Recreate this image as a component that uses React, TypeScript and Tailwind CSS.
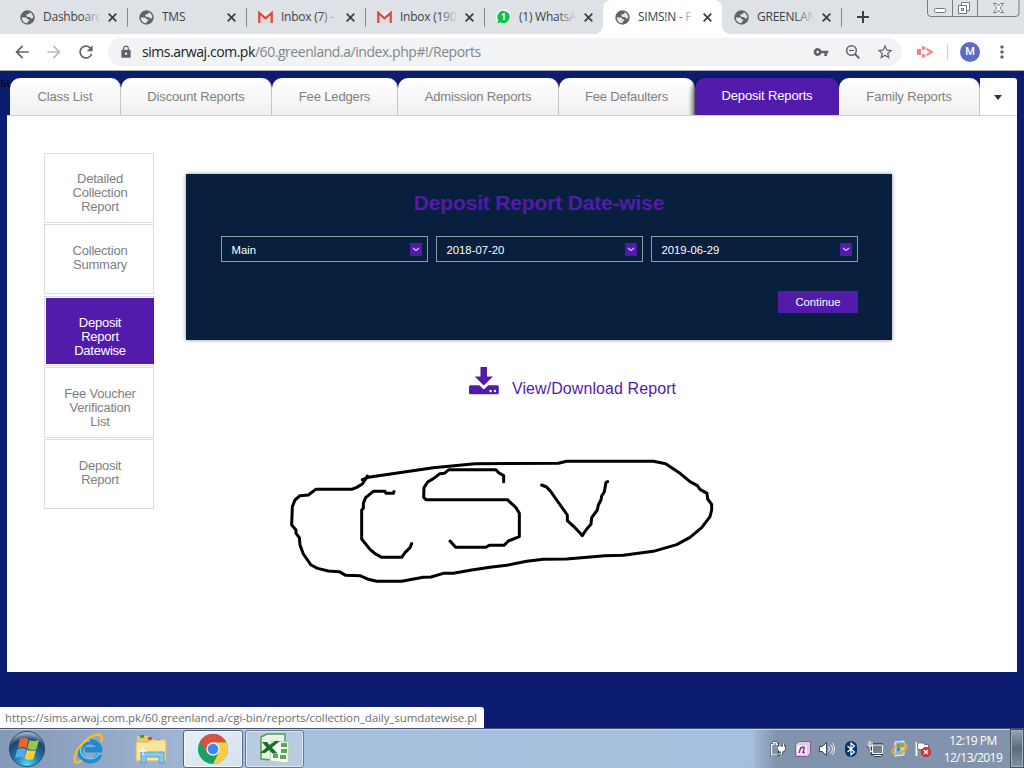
import React from "react";
import {
  MdArrowBack,
  MdArrowForward,
  MdRefresh,
  MdLock,
  MdVpnKey,
  MdStarBorder,
  MdMoreVert,
} from "react-icons/md";

const Globe = () => (
  <svg viewBox="0 0 15 15" className="h-[15px] w-[15px]">
    <circle cx="7.500" cy="7.500" r="7.200" fill="#5f6368" />
    <path
      d="M1.800 7.600H5.600Q7.600 7.800 7.600 9.600H9.200V11L7.800 11.500 7.300 13.300Q4.500 13.200 3 11.200 1.800 9.700 1.800 7.600z"
      fill="#e3e5e8"
    />
    <path
      d="M9.600 2.200Q12.900 3.600 13.300 7.300L12.300 8.600H10.800L10.200 6.900H7.600L6.400 5.800V4.300H8.300L9.400 3.300z"
      fill="#e3e5e8"
    />
  </svg>
);

const Gmail = () => (
  <svg viewBox="0 0 15 12" className="h-3 w-[15px]">
    <path d="M1 1h13v11H1z" fill="#ececec" />
    <path d="M3 4l4.500 4L12 4v8H3z" fill="#dcdcdc" />
    <path d="M1.300 12V2L7.500 7.300l6.200-5.300v10" fill="none" stroke="#d84a3c" strokeWidth="2.300" />
  </svg>
);

const WhatsApp = () => (
  <svg viewBox="0 0 16 16" className="h-4 w-4">
    <circle cx="8" cy="8" r="8" fill="#fff" />
    <path d="M8 1.200a6.700 6.700 0 1 1-3.300 12.600L1.500 14.600l.9-3.200A6.700 6.700 0 0 1 8 1.200z" fill="#0fc24a" />
    <path d="M6.300 5.800L8.500 4.500V11.300" fill="none" stroke="#fff" strokeWidth="1.600" />
  </svg>
);

type BrowserTabData = { icon: "globe" | "gmail" | "whatsapp"; title: string; state?: "active" | "before" };

const browserTabs: BrowserTabData[] = [
  { icon: "globe", title: "Dashboard" },
  { icon: "globe", title: "TMS" },
  { icon: "gmail", title: "Inbox (7) -" },
  { icon: "gmail", title: "Inbox (190" },
  { icon: "whatsapp", title: "(1) WhatsA", state: "before" },
  { icon: "globe", title: "SIMS!N - F", state: "active" },
  { icon: "globe", title: "GREENLAN" },
];

function BrowserTab({ icon, title, state }: BrowserTabData) {
  const active = state === "active";
  return (
    <div
      className={
        "relative flex h-[34px] w-[119px] shrink-0 items-center pl-[12px] " +
        (active ? "rounded-t-lg bg-white" : "")
      }
    >
      <div className="flex w-[15px] shrink-0 justify-center">
        {icon === "globe" && <Globe />}
        {icon === "gmail" && <Gmail />}
        {icon === "whatsapp" && <WhatsApp />}
      </div>
      <div className="relative ml-[8px] h-[18px] w-[58px] overflow-hidden text-[12px] leading-[18px] tracking-[-0.25px] whitespace-nowrap text-[#3f4347]">
        {title}
        <div
          className={
            "absolute inset-y-0 right-0 w-[20px] bg-linear-to-r " +
            (active ? "from-white/0 to-white" : "from-[#dee1e6]/0 to-[#dee1e6]")
          }
        />
      </div>
      <svg
        viewBox="0 0 9 9"
        className="ml-[7px] size-[9px] shrink-0"
        fill="none"
        stroke="#3c4043"
        strokeWidth="1.800"
      >
        <path d="M.7.700l7.600 7.600M8.300.700L.7 8.300" />
      </svg>
      {!state && <div className="absolute top-[8px] -right-px h-[19px] w-px bg-[#85898d]" />}
      {active && (
        <>
          <div className="absolute bottom-0 -left-2 h-2 w-2 bg-[radial-gradient(circle_at_top_left,#dee1e6_7.5px,#fff_8px)]" />
          <div className="absolute -right-2 bottom-0 h-2 w-2 bg-[radial-gradient(circle_at_top_right,#dee1e6_7.5px,#fff_8px)]" />
        </>
      )}
    </div>
  );
}

function WindowButtons() {
  return (
    <svg viewBox="0 0 93 18" className="mr-[4px] ml-auto h-[18px] w-[93px] self-start" fill="none" stroke="#777b80">
      <path d="M.5 0v13q0 3.500 3.500 3.500h84.500q3.500 0 3.500-3.500V0M25.500 0v16M50.500 0v16" />
      <rect x="7.500" y="8.500" width="11" height="4" rx="1" fill="#fff" />
      <path d="M34.500 5.500v-3h8v8h-3" fill="#fff" />
      <rect x="31.500" y="5.500" width="8" height="8" fill="#fff" />
      <rect x="34.500" y="8.500" width="2" height="2" />
      <path d="M66.500 3.500h3l2 2.500 2-2.500h3l-3.500 4.500 3.500 4.500h-3l-2-2.500-2 2.500h-3l3.500-4.500z" fill="#fff" />
    </svg>
  );
}

function Toolbar() {
  return (
    <div className="flex h-[37px] shrink-0 items-center border-b border-[#a9abb0] bg-white text-[#5f6368]">
      <MdArrowBack className="ml-[12px] size-5" />
      <MdArrowForward className="ml-[12px] size-5 text-[#babcbe]" />
      <MdRefresh className="ml-[12px] size-5" />
      <div className="ml-[12px] flex h-7 w-[794px] items-center rounded-full bg-[#f1f3f4]">
        <MdLock className="ml-[11px] size-[14px]" />
        <div className="ml-[9px] text-[14px] leading-5 tracking-[-0.45px] whitespace-nowrap text-[#80868b]">
          <span className="text-[#202124]">sims.arwaj.com.pk</span>
          /60.greenland.a/index.php#!/Reports
        </div>
        <MdVpnKey className="ml-auto size-4" />
        <svg viewBox="0 0 16 16" className="mr-px ml-[16px] size-4" fill="none" stroke="#5f6368">
          <circle cx="6.500" cy="6.500" r="4.800" strokeWidth="1.500" />
          <path d="M4 6.500h5" strokeWidth="1.200" />
          <path d="M10 10l4.300 4.300" strokeWidth="1.900" />
        </svg>
        <MdStarBorder className="mr-[8px] ml-[14px] size-[18px]" />
      </div>
      <svg viewBox="0 0 16 14" className="ml-[15px] h-[14px] w-4">
        <path d="M0 4h4v6H0z" fill="#fd8080" />
        <path
          d="M6 5V2.300l2.500 1.200M9.500 4L15 7l-5.500 3M8.500 10.500L6 11.700V9"
          fill="none"
          stroke="#fd8080"
          strokeWidth="2"
        />
      </svg>
      <div className="ml-[14px] h-4 w-px bg-[#c8cacc]" />
      <div className="ml-[12px] flex size-5 items-center justify-center rounded-full bg-[#5c6bc0] font-['Roboto',sans-serif] text-[11px] font-medium text-white">
        M
      </div>
      <MdMoreVert className="ml-[12px] size-5" />
    </div>
  );
}

const reportTabs = [
  { label: "Class List", w: "w-[111px]" },
  { label: "Discount Reports", w: "w-[151px]" },
  { label: "Fee Ledgers", w: "w-[126px]" },
  { label: "Admission Reports", w: "w-[161px]" },
  { label: "Fee Defaulters", w: "w-[136px]" },
  { label: "Deposit Reports", w: "w-[144px]", active: true },
  { label: "Family Reports", w: "w-[141px]" },
];

function ReportTabs() {
  return (
    <div className="mr-[7px] ml-[10px] flex h-[38px] shrink-0 text-[13px] tracking-[-0.15px]">
      {reportTabs.map((t) =>
        t.active ? (
          <div
            key={t.label}
            className={
              t.w +
              " flex items-center justify-center rounded-t-[10px] border-b border-[#c5c5c5] bg-[#531bac] pb-[2px] text-white shadow-[-3px_2px_4px_rgba(0,0,0,0.55)]"
            }
          >
            {t.label}
          </div>
        ) : (
          <div
            key={t.label}
            className={
              t.w +
              " flex items-center justify-center rounded-t-[10px] border-r border-b border-[#c5c5c5] bg-linear-to-b from-white to-[#f0f0f0] pt-px text-[#808080]"
            }
          >
            {t.label}
          </div>
        )
      )}
      <div className="flex flex-1 items-center justify-center rounded-tr-[3px] border-b border-[#c5c5c5] bg-white pt-px pr-[2px]">
        <div className="h-0 w-0 border-x-[4.5px] border-t-[5px] border-x-transparent border-t-[#333]" />
      </div>
    </div>
  );
}

function Sidebar() {
  const box = "flex w-[110px] flex-col border border-[#dcdcdc] text-center";
  return (
    <nav className="mt-[37px] ml-[37px] w-[110px] shrink-0 text-[13px] leading-[14px] tracking-[-0.22px] text-[#808080]">
      <div className={box + " h-[70px] pt-[18px] pr-[15px] pl-[17px]"}>Detailed Collection Report</div>
      <div className={box + " mt-px h-[70px] pt-[19px] pr-[15px] pl-[17px]"}>Collection Summary</div>
      <div className={box + " mt-[2px] h-[70px] pt-px pl-px"}>
        <div className="-mr-px h-[66px] bg-[#531bac] px-6 pt-[18px] text-white">Deposit Report Datewise</div>
      </div>
      <div className={box + " mt-px h-[71px] pt-[19px] pr-[15px] pl-[17px]"}>Fee Voucher Verification List</div>
      <div className={box + " mt-px h-[70px] pt-[19px] pr-[23px] pl-[25px]"}>Deposit Report</div>
    </nav>
  );
}

function SelectBox({ value }: { value: string }) {
  return (
    <div className="flex h-[26px] w-[207px] items-center border border-[#929ba8] pr-[5px] pl-[10px] text-[11.300px] text-white">
      <span className="pt-[2px]">{value}</span>
      <span className="ml-auto flex h-[13px] w-3 items-center justify-center bg-[#531bac]">
        <svg viewBox="0 0 8 5" className="h-[5px] w-2" fill="none" stroke="#d0c0ea" strokeWidth="1.300">
          <path d="M1 1l3 2.500L7 1" />
        </svg>
      </span>
    </div>
  );
}

function ReportPanel() {
  return (
    <section className="mt-[58px] flex h-[166px] w-[706px] flex-col items-center bg-[#081f3d] shadow-[0_0_4px_rgba(0,0,0,0.45)]">
      <h1 className="mt-[16px] text-[21px] leading-[26px] font-bold tracking-[-0.17px] text-[#531bac]">
        Deposit Report Date-wise
      </h1>
      <div className="mt-5 flex gap-2">
        <SelectBox value="Main" />
        <SelectBox value="2018-07-20" />
        <SelectBox value="2019-06-29" />
      </div>
      <button className="mt-[29px] mr-[34px] h-[22px] w-[80px] self-end bg-[#531bac] text-[11.300px] text-white">
        Continue
      </button>
    </section>
  );
}

function DownloadIcon() {
  return (
    <svg viewBox="0 0 30 28" className="h-7 w-[30px]" fill="#531bac">
      <path d="M11.500 0h6.500v9.500h6L14.800 18.500 5.700 9.500h5.800z" />
      <path d="M1.500 18.300h8.700l4.600 4.200 4.600-4.200h8.900q1.500 0 1.500 1.500v6q0 1.500-1.500 1.500H1.500Q0 27.300 0 25.800v-6q0-1.500 1.500-1.500z" />
      <circle cx="21.600" cy="24" r="1.200" fill="#fff" />
      <circle cx="26" cy="24" r="1.200" fill="#fff" />
    </svg>
  );
}

function PenMarkup() {
  return (
    <svg
      viewBox="0 0 1320 405"
      className="pointer-events-none absolute top-[450px] left-[280px] h-[135px] w-[440px]"
      fill="none"
      stroke="#000"
      strokeWidth="9"
      strokeLinejoin="round"
      strokeLinecap="round"
    >
      <path d="M262 78L255 90 247 102 230 112 215 118H107L85 135 60 137 45 150 37 170 35 225 48 240V250L58 263 60 285 70 312 93 345 113 355 145 363 178 365 197 376 240 377 265 388 290 394H365L430 382 453 381 490 370H520L575 360 630 352 680 346 740 334 790 328 860 327 975 317 1030 316 1120 304 1190 284 1230 262 1265 233 1290 200 1295 180V163L1283 147 1281 130 1260 118 1252 107 1230 95 1200 70 1157 41 1120 34H860L835 40 585 41 460 53 265 82 247 89" />
      <path d="M342 125L340 130H318L315 124H280L257 143 250 160V175L245 180V267L270 298 285 311 305 322H365L375 308 390 293 395 281" />
      <path d="M671 95V77L657 69 647 59H507L493 70 480 71 460 86 443 96 432 113 431 142 438 149H682L708 173 718 190V260L685 273 672 286H628L618 292H527L510 273" />
      <path d="M785 105L800 111 814 127 830 150 862 195V212L885 233 898 247 907 257 918 240 933 222 935 203 952 180 955 165 963 150 965 138 973 125 978 97 983 95" />
    </svg>
  );
}

function Taskbar() {
  return (
    <footer className="flex h-[40px] shrink-0 items-center border-t border-[#475273] bg-linear-to-r from-[#8498b7] via-[#a8c1df] via-25% to-[#a2bddc] shadow-[inset_0_1px_0_#c5d3e4]">
      <svg viewBox="0 0 38 38" className="ml-[8px] h-[38px] w-[38px]">
        <defs>
          <radialGradient id="orb" cx=".5" cy=".95" r=".95">
            <stop offset="0" stopColor="#51dcf6" />
            <stop offset=".4" stopColor="#1b78ae" />
            <stop offset=".75" stopColor="#1c4670" />
            <stop offset="1" stopColor="#b5ccdd" />
          </radialGradient>
        </defs>
        <circle cx="19" cy="19" r="17.500" fill="url(#orb)" stroke="#314764" />
        <path d="M12 9q4.500-2 8.500 0.500l-2 8.500q-4-2-8.800 0z" fill="#ee6427" />
        <path d="M21.500 10q4.500 2 9.500 0l-2.500 9q-5 2-9.200-.5z" fill="#98c743" />
        <path d="M9.300 19.300q4.500-2 8.800 0l-2.300 8.700q-4-2-8.800 0z" fill="#53aaea" />
        <path d="M18.900 19.700q4.500 2 9.200.2l-2.600 9q-4.500 2-8.900-.5z" fill="#fdca39" />
      </svg>
      <svg viewBox="0 0 32 32" className="ml-[27px] h-8 w-8">
        <path d="M26.500 21.500A10 9.500 0 1 1 26.500 15v1.800H12" fill="none" stroke="#218bd0" strokeWidth="5.500" />
        <path d="M26 20.500A10 10 0 0 1 7.500 18Q8 8 17 7.500" fill="none" stroke="#79d1f6" strokeWidth="1.500" />
        <path d="M9 27.500Q0 33 2 23 5 12 16 5q12-7 13 0 0 2-1 4" fill="none" stroke="#f5bd25" strokeWidth="2.500" />
      </svg>
      <svg viewBox="0 0 34 32" className="ml-[29px] h-8 w-[34px]">
        <path d="M3 3h12l2 3h13v20H3z" fill="#e8c967" />
        <path d="M6 2h4v3H6z" fill="#30a443" />
        <path d="M14 4h4v3h-4z" fill="#d84e34" />
        <path d="M22 6h4v2h-4z" fill="#338fd1" />
        <path d="M2 9h12l3-2h15v21H2z" fill="#f7e5a0" stroke="#d8b75c" />
        <path d="M7 30V19h23v11h-5v-6H12v6z" fill="#8bc8e8" stroke="#559fc9" />
        <path d="M9 14v8M5 18h8" stroke="#fff" />
      </svg>
      <div className="ml-[15px] flex h-[38px] w-[60px] items-center justify-center rounded-[3px] border border-[#55657e] bg-linear-to-br from-[#e9eff7] to-[#d4e0ed] shadow-[inset_0_0_0_1px_#f5f9fd]">
        <svg viewBox="0 0 30 30" className="size-[30px]">
          <circle cx="15" cy="15" r="15" fill="#1aa160" />
          <path d="M15 8.300H28.400A15 15 0 0 1 15 30l6-12z" fill="#ffcd40" />
          <path d="M2 7.500L9.200 18.400 15 15V8.300h13.400A15 15 0 0 0 2 7.500z" fill="#dd4f40" />
          <circle cx="15" cy="15" r="6.700" fill="#f1f1f1" />
          <circle cx="15" cy="15" r="5.300" fill="#4385f3" />
        </svg>
      </div>
      <div className="ml-[2px] flex h-[38px] w-[59px] items-center justify-center rounded-[3px] border border-[#667995] bg-[#b8cbe0] shadow-[inset_0_0_0_1px_#dce7f2]">
        <svg viewBox="0 0 31 31" className="size-[31px]">
          <path d="M2 4L8 1h18v27L2 26z" fill="#e8f5e5" stroke="#51a345" strokeWidth="1.500" />
          <path d="M12 8l18 1-1 21-18-2z" fill="#f6fbf4" stroke="#b5d3b0" />
          <path d="M22 10h6v4h-6zM22 16h6v4h-6zM21 22h6v4h-6zM14 21h5v4h-5z" fill="#58a857" />
          <path d="M3 9h5l2.500 3L16 8h5l-8 6.500 5.500 6h-5L10 17l-4 3H1l6.500-5.500z" fill="#1b6e2b" />
        </svg>
      </div>
      <div className="ml-auto flex h-full w-[269px] items-center bg-linear-to-r from-[#9db6d4] to-[#8294ab] to-8% shadow-[inset_0_1px_0_#c5d3e4]">
        <svg viewBox="0 0 16 16" className="ml-[15px] size-4">
          <path d="M1.500 3.500h2v-2h3v2h2v10.500h-7z" fill="none" stroke="#2c3541" strokeWidth="2" />
          <path d="M10 2.500v3M13.500 2.500v3M8.500 5.500h6V8q0 2-2 2.500h-1V13H7" fill="none" stroke="#2c3541" strokeWidth="2.200" />
          <path d="M8 3.500H6.500v-2h-3v2h-2V14h6" fill="#8294ab" stroke="#fff" strokeWidth="1.200" />
          <path d="M8 5.500h7V8q0 2-2 2.500h-3Q8 10 8 8z" fill="#fff" />
          <path d="M10 2.500v4M13.500 2.500v4M11.500 10v3H7.500" fill="none" stroke="#fff" strokeWidth="1.200" />
        </svg>
        <svg viewBox="0 0 16 16" className="ml-[9px] size-4">
          <path d="M3.500.500h12v12l-3 3H.5V3.500z" fill="#ddc9e0" stroke="#8d5395" />
          <path d="M2 4.500h10v9H2z" fill="#f8f3f9" />
          <path d="M4 12l2-6M5 8q5-4 4 0l-1 3.500h2" fill="none" stroke="#85338f" strokeWidth="1.500" />
        </svg>
        <svg viewBox="0 0 16 16" className="ml-[8px] size-4">
          <path d="M.5 5.500h3l4-4v13l-4-4h-3z" fill="#fff" stroke="#3f4652" />
          <path d="M9.500 5.500q2 2.500 0 5M11.500 3.500q4 4.500 0 9M13.500 2q4 6 0 12" fill="none" stroke="#e5eaf0" />
        </svg>
        <svg viewBox="0 0 16 16" className="ml-[8px] size-4">
          <rect x="2" width="12" height="16" rx="6" fill="#003271" />
          <path d="M4.500 5l7 6-3.500 3V2l3.500 3-7 6" fill="none" stroke="#fff" strokeWidth="1.200" />
        </svg>
        <svg viewBox="0 0 16 16" className="ml-[8px] size-4">
          <path d="M5 3.500h11v9.500H5zM7 15h7M1 1v4h4V1M3 5v5" fill="none" stroke="#303946" strokeWidth="2.500" />
          <path d="M5.500 4h10v8.500h-10z" fill="#748294" stroke="#fff" />
          <path d="M7 14.500h7M1 1v4h4V1M3 0v8q0 3 3 3" fill="none" stroke="#fff" strokeWidth="1.200" />
        </svg>
        <svg viewBox="0 0 17 17" className="ml-[8px] h-[17px] w-[17px]">
          <path d="M4 2l9-1v14l-9 1z" fill="#7cc2ed" stroke="#e7f4fc" />
          <ellipse
            cx="8.500"
            cy="9"
            rx="8"
            ry="4"
            transform="rotate(-25 8.500 9)"
            fill="none"
            stroke="#efa43b"
            strokeWidth="1.800"
          />
          <path d="M6 4l3-1v4L6 8z" fill="#e46a36" />
          <path d="M9.500 3h3.500v4H9.500z" fill="#77b843" />
          <path d="M6 8.500l3-1v3l-3 1z" fill="#2f87d0" />
          <path d="M9.500 7.500H13v3H9.500z" fill="#f5ce45" />
        </svg>
        <svg viewBox="0 0 16 16" className="ml-[7px] size-4">
          <path d="M1.500 1v14" stroke="#fff" strokeWidth="1.800" />
          <path d="M2.500 2h6l1 1.500h4v6h-5l-1-1h-5z" fill="#fff" stroke="#48515f" strokeWidth=".7" />
          <circle cx="11" cy="11" r="4.700" fill="#dd2f2e" stroke="#a41e22" strokeWidth=".6" />
          <path d="M9 9l4 4M13 9l-4 4" stroke="#fff" strokeWidth="1.500" />
        </svg>
        <div className="ml-[10px] w-[64px] text-center text-[12px] leading-[17px] tracking-[-0.5px] whitespace-nowrap text-white">
          12:19 PM
          <br />
          12/13/2019
        </div>
        <div className="ml-auto h-full w-[14px] border border-[#46505f] bg-linear-to-b from-[#95a4b8] via-[#5c6b7e] to-[#8291a4] shadow-[inset_0_0_0_1px_#a4b1c1]" />
      </div>
    </footer>
  );
}

export default function App() {
  return (
    <div className="relative flex h-[768px] w-[1024px] flex-col overflow-hidden bg-[#0c1c70] font-['Open_Sans','Noto_Sans',sans-serif]">
      <header className="flex h-[34px] shrink-0 bg-[#dee1e6] pl-[8px]">
        {browserTabs.map((t) => (
          <BrowserTab key={t.title} {...t} />
        ))}
        <svg viewBox="0 0 12 12" className="mt-[11px] ml-[16px] size-3" stroke="#3c4043" strokeWidth="2">
          <path d="M6 0v12M0 6h12" />
        </svg>
        <WindowButtons />
      </header>
      <Toolbar />
      <main className="relative flex flex-1 flex-col pt-[7px] font-['Liberation_Sans',Arial,sans-serif]">
        <div className="absolute top-[2px] left-0 text-[13px] text-black">su</div>
        <div className="relative flex flex-col">
          <ReportTabs />
          <div className="mx-[7px] -mt-px flex h-[557px] w-[1010px] border-t border-[#d0d0d0] bg-white">
            <Sidebar />
            <div className="ml-[32px] flex w-[706px] flex-col">
              <ReportPanel />
              <a className="mt-[27px] ml-[283px] flex items-start gap-[13px] text-[16px] tracking-[0.08px] text-[#531bac]">
                <DownloadIcon />
                <span className="mt-[12px] leading-5">View/Download Report</span>
              </a>
            </div>
          </div>
        </div>
      </main>
      <Taskbar />
      <PenMarkup />
      <div className="absolute top-[707px] left-0 flex h-[21px] w-[484px] items-center rounded-tr-[3px] bg-white pl-[5px] text-[11.500px] tracking-[-0.09px] whitespace-nowrap text-[#6b6f73]">
        https://sims.arwaj.com.pk/60.greenland.a/cgi-bin/reports/collection_daily_sumdatewise.pl
      </div>
    </div>
  );
}
